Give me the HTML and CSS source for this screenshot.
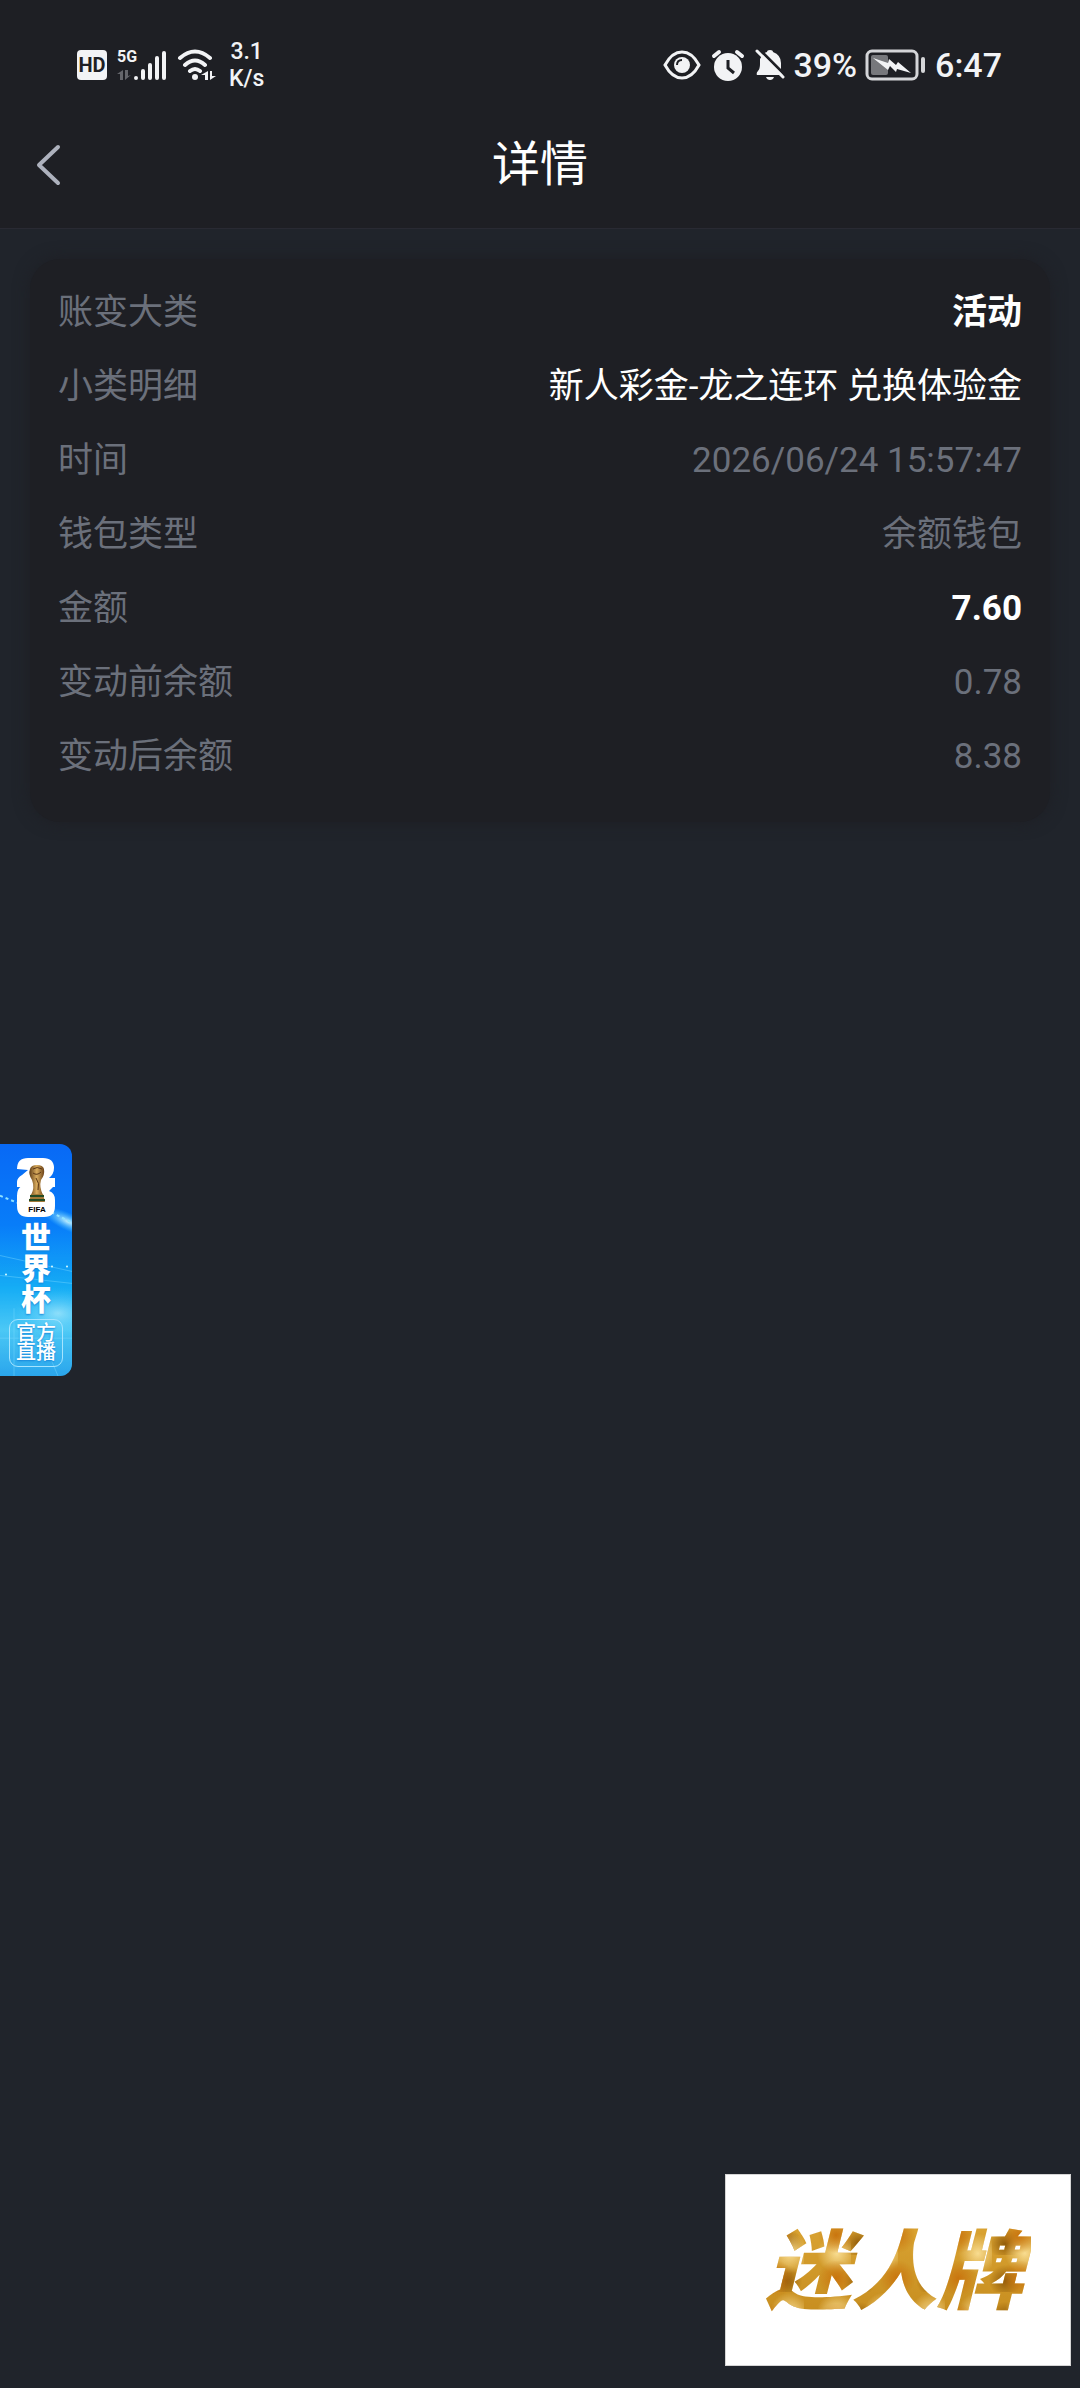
FILE: index.html
```html
<!DOCTYPE html>
<html lang="zh-CN">
<head>
    <meta charset="UTF-8">
    <meta name="viewport" content="width=device-width, initial-scale=1.0">
    <title>详情</title>
    <link rel="stylesheet" href="styles.css">
</head>
<body>
    <header class="header">
        <div class="status-bar">
            <div class="status-left">
                <span class="hd">HD</span>
                <div class="signal">
                    <span class="network">5G</span>
                    <svg width="50" height="34" viewBox="0 0 50 34">
                        <g fill="#65666b"><path d="M6 22v10H3v-6H0zM8 32V22h3v6l3-1z"/></g>
                        <g stroke="#f2f3f5" stroke-width="4" stroke-linecap="round">
                            <path d="M19 30v0M26 23v7M33 17v13M40 10v20M47 5v25"/>
                        </g>
                    </svg>
                </div>
                <svg width="40" height="34" viewBox="0 0 40 34">
                    <g fill="none" stroke="#f2f3f5" stroke-width="4" stroke-linecap="round">
                        <path d="M3 10Q18-3 33 10M8 17Q18 8 28 17M13 23Q18 19 23 23"/>
                    </g>
                    <circle cx="18" cy="29" r="3" fill="#f2f3f5"/>
                    <path d="M31 23v9h-3v-5h-4zM33 32v-9h2v5h4z" fill="#f2f3f5"/>
                </svg>
                <span class="speed">3.1<br>K/s</span>
            </div>
            <div class="status-right">
                <svg class="eye" width="38" height="32" viewBox="0 0 38 32">
                    <path d="M2 16Q9 3 19 3t17 13Q29 29 19 29T2 16z" fill="none" stroke="#f2f3f5" stroke-width="3"/>
                    <circle cx="19" cy="16" r="8" fill="#f2f3f5"/>
                    <path d="M14 16q0-5 5-5" fill="none" stroke="#1e1f24" stroke-width="2"/>
                </svg>
                <svg class="alarm" width="34" height="32" viewBox="0 0 34 32">
                    <circle cx="17" cy="18" r="14" fill="#f2f3f5"/>
                    <path d="M3 7l5-4M31 7l-5-4" stroke="#f2f3f5" stroke-width="4" stroke-linecap="round"/>
                    <path d="M17 11v8l6 5" fill="none" stroke="#1e1f24" stroke-width="3"/>
                </svg>
                <svg class="bell" width="30" height="32" viewBox="0 0 30 32">
                    <path d="M8 5q3-2 4-2 0-2 3-2t3 2q8 3 8 11v9l2 3H2q-1-2 1-4 2-2 2-7v-5z" fill="#f2f3f5"/>
                    <path d="M11 28h8q-1 3-4 3t-4-3z" fill="#f2f3f5"/>
                    <path d="M4 0l26 26" stroke="#1e1f24" stroke-width="3"/>
                    <path d="M2 2l26 26" stroke="#f2f3f5" stroke-width="3" stroke-linecap="round"/>
                </svg>
                <span class="percent">39%</span>
                <svg class="battery" width="60" height="32" viewBox="0 0 60 32">
                    <rect x="2" y="2" width="50" height="28" rx="5" fill="none" stroke="#d4d5d8" stroke-width="3"/>
                    <rect x="6" y="6" width="17" height="20" rx="2" fill="#77787c"/>
                    <path d="M8 9l15 5 1-4 7 6 2-3 13 11-14-4-1 3-6-6-2 4z" fill="#f2f3f5"/>
                    <path d="M58 10v12" stroke="#d4d5d8" stroke-width="4" stroke-linecap="round"/>
                </svg>
                <span>6:47</span>
            </div>
        </div>
        <div class="nav-bar">
            <button class="back" type="button" aria-label="返回">
                <svg width="28" height="42" viewBox="0 0 28 42">
                    <path d="M24 3L5 21l19 18" fill="none" stroke="#adb1bd" stroke-width="4" stroke-linecap="round" stroke-linejoin="round"/>
                </svg>
            </button>
            <h1 class="title">详情</h1>
        </div>
    </header>

    <main class="content">
        <dl class="card">
            <div class="row"><dt>账变大类</dt><dd class="strong">活动</dd></div>
            <div class="row"><dt>小类明细</dt><dd class="light">新人彩金-龙之连环 兑换体验金</dd></div>
            <div class="row"><dt>时间</dt><dd>2026/06/24 15:57:47</dd></div>
            <div class="row"><dt>钱包类型</dt><dd>余额钱包</dd></div>
            <div class="row"><dt>金额</dt><dd class="strong">7.60</dd></div>
            <div class="row"><dt>变动前余额</dt><dd>0.78</dd></div>
            <div class="row"><dt>变动后余额</dt><dd>8.38</dd></div>
        </dl>
    </main>

    <a class="live" href="#live">
        <svg class="live-bg" viewBox="0 0 72 233" preserveAspectRatio="none" aria-hidden="true">
            <defs>
                <radialGradient id="glow">
                    <stop offset="0" stop-color="#d8fbff" stop-opacity=".9"/>
                    <stop offset="1" stop-color="#4fd0ff" stop-opacity="0"/>
                </radialGradient>
            </defs>
            <ellipse cx="68" cy="78" rx="28" ry="9" fill="url(#glow)" transform="rotate(25 68 78)"/>
            <ellipse cx="58" cy="170" rx="44" ry="26" fill="url(#glow)" opacity=".6"/>
            <path d="M0 52l20 8M46 66l26 13" stroke="#8fe3ff" stroke-width="2" stroke-dasharray="3 3"/>
            <path d="M0 112l72 16M0 132l72 8M0 195h72M14 165v68M40 190l18 43" stroke="#7fdcff" opacity=".4"/>
            <g fill="#d8fbff"><circle cx="52" cy="123" r="1"/><circle cx="67" cy="123" r="1"/><circle cx="6" cy="131" r="1"/></g>
        </svg>
        <svg class="cup" width="40" height="60" viewBox="0 0 40 60" role="img" aria-label="FIFA">
            <defs>
                <linearGradient id="trophy">
                    <stop offset="0" stop-color="#5f3c17"/>
                    <stop offset=".5" stop-color="#d9ac5d"/>
                    <stop offset="1" stop-color="#6b4218"/>
                </linearGradient>
            </defs>
            <path d="M1 11Q1 0 12 0h15q11 0 11 10 0 6-5 10h6v9H1v-5q0-4 5-7l6-5z" fill="#fff"/>
            <path d="M11 27h28l-6 6q6 2 6 9v6q0 11-11 11H12Q1 59 1 48V38q0-11 10-11z" fill="#fff"/>
            <path d="M14 11q1-4 7-4t7 4q1 6-3 11-2 7 2 15H15q4-7 1-15-4-6-2-11z" fill="url(#trophy)"/>
            <path d="M17 11q4-3 9 0M17 15q4 3 8-1M20 20q4 5 2 12" fill="none" stroke="#5b3715"/>
            <path d="M15 36h12l2 8H13z" fill="#a17a38"/>
            <path d="M14 38h14M13 42h16" stroke="#244b24" stroke-width="2"/>
            <text class="fifa" x="21" y="54" text-anchor="middle">FIFA</text>
        </svg>
        <span class="live-title">世界杯</span>
        <span class="live-tag">官方直播</span>
    </a>

    <div class="brand"><span class="brand-text">迷人牌</span></div>
</body>
</html>
```
FILE: styles.css
```css
* {
    box-sizing: border-box;
}

body {
    margin: 0;
    min-height: 100vh;
    background-color: #20242b;
    color: #6b707b;
    font-family: Roboto, "Noto Sans CJK SC", sans-serif;
    font-size: 35px;
}

svg {
    display: block;
    flex: none;
}

.header {
    background-color: #1e1f24;
    border-bottom: 1px solid #292a33;
}

.status-bar {
    display: flex;
    justify-content: space-between;
    align-items: center;
    height: 105px;
    padding: 24px 78px 0 77px;
    color: #f2f3f5;
}

.status-left,
.status-right {
    display: flex;
    align-items: center;
}

.status-left {
    gap: 10px;
}

.hd {
    width: 30px;
    border-radius: 4px;
    background-color: #f2f3f5;
    color: #1e1f24;
    font-size: 20px;
    font-weight: 700;
    line-height: 30px;
    text-align: center;
}

.signal {
    position: relative;
}

.network {
    position: absolute;
    top: 0;
    left: 0;
    font-family: Roboto, sans-serif;
    font-size: 16px;
    font-weight: 700;
    line-height: 18px;
}

.speed {
    padding-left: 2px;
    font-size: 23px;
    font-weight: 500;
    line-height: 27px;
    text-align: center;
}

.status-right {
    font-size: 34px;
    font-weight: 500;
    line-height: 40px;
}

.alarm,
.bell {
    margin-left: 10px;
}

.percent {
    margin: 0 8px;
}

.battery {
    margin-right: 10px;
}

.nav-bar {
    display: grid;
    grid-template-columns: 96px 1fr 96px;
    align-items: center;
    height: 123px;
    padding-bottom: 4px;
}

.back {
    justify-self: start;
    padding: 10px 34px;
    border: none;
    background: none;
    cursor: pointer;
}

.title {
    margin: 0;
    color: #fff;
    font-size: 48px;
    font-weight: 400;
    line-height: 60px;
    text-align: center;
}

.content {
    padding: 30px;
}

.card {
    margin: 0;
    padding: 17px 28px 28px;
    border-radius: 30px;
    background-color: #1e1f24;
    box-shadow: 0 0 16px #1e1f24;
}

.row {
    display: flex;
    justify-content: space-between;
    align-items: center;
    min-height: 74px;
    line-height: 50px;
}

.row dd {
    margin: 0;
    text-align: right;
}

.row .light {
    color: #fff;
}

.row .strong {
    color: #fff;
    font-weight: 700;
}

/* floating live entry on the left edge */
.live {
    position: fixed;
    top: 1144px;
    left: 0;
    display: flex;
    flex-direction: column;
    align-items: center;
    width: 72px;
    padding: 14px 0 9px;
    overflow: hidden;
    border-radius: 0 12px 12px 0;
    background: linear-gradient(#0869f5, #087df9 35%, #16adf5 62%, #4cc8f5 80%, #2ba6ec);
    color: #fff;
    text-decoration: none;
}

.live-bg {
    position: absolute;
    top: 0;
    left: 0;
    width: 100%;
    height: 100%;
}

.cup,
.live-title,
.live-tag {
    position: relative;
}

.fifa {
    font-family: "Liberation Sans", Arial, sans-serif;
    font-size: 8px;
    font-weight: 700;
}

.live-title {
    width: 30px;
    margin: 4px 0;
    font-size: 30px;
    font-weight: 900;
    line-height: 31px;
    text-shadow: 0 1px 2px #1683d8;
}

.live-tag {
    width: 54px;
    padding: 4px 6px;
    border: 1px solid #a5e4ff;
    border-radius: 9px;
    font-size: 20px;
    font-weight: 500;
    line-height: 19px;
    text-shadow: 0 1px 2px #1683d8;
}

.brand {
    position: fixed;
    right: 9px;
    bottom: 22px;
    display: flex;
    justify-content: center;
    align-items: center;
    width: 346px;
    height: 192px;
    padding: 6px 8px 0 0;
    border: 1px solid #d5d5d5;
    background-color: #fff;
}

.brand-text {
    padding: 0 8px;
    background:
        radial-gradient(circle at 30% 40%, #c9750f, transparent 18px) 0 0 / 61px 43px,
        radial-gradient(circle at 70% 60%, #f8dc90, transparent 20px) 0 0 / 47px 59px,
        radial-gradient(circle at 40% 70%, #8f5a0a, transparent 16px) 0 0 / 73px 37px,
        linear-gradient(#dba534, #c48a1c);
    -webkit-background-clip: text;
    background-clip: text;
    color: transparent;
    font-size: 86px;
    font-style: italic;
    font-weight: 900;
    line-height: 110px;
}
```
